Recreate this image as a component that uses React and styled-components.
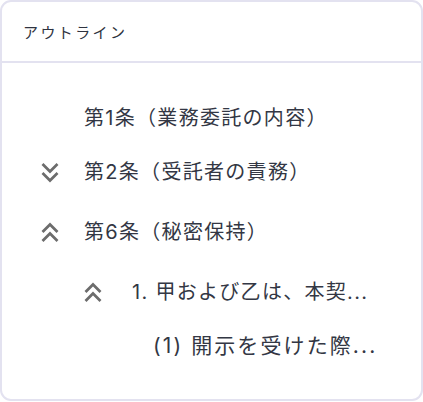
import React from "react";
import styled, { createGlobalStyle } from "styled-components";

const GlobalStyle = createGlobalStyle`
  html, body {
    margin: 0;
    padding: 0;
    background: #fff;
  }
  body {
    font-family: "Inter", "Noto Sans CJK JP", sans-serif;
  }
`;

const Card = styled.div`
  box-sizing: border-box;
  width: 423px;
  height: 401px;
  border: 2px solid #e3e2f0;
  border-radius: 11px;
  background: #fff;
  display: flex;
  flex-direction: column;
  overflow: hidden;
`;

const Header = styled.div`
  height: 59px;
  display: flex;
  align-items: center;
  padding: 0 21px;
  border-bottom: 2px solid #e3e2f0;
  font-size: 15px;
  color: #2f3340;
  letter-spacing: 2.4px;
`;

const Tree = styled.ul`
  list-style: none;
  margin: 0;
  padding: 31px 0 0;
`;

const Row = styled.li`
  display: flex;
  align-items: center;
  height: ${(p) => (p.$hasToggle ? 60 : 48)}px;
  padding-left: ${(p) => p.$indent}px;
`;

const Toggle = styled.button`
  display: flex;
  align-items: center;
  justify-content: center;
  width: 22px;
  height: 36px;
  padding: 0;
  margin-right: ${(p) => p.$gap}px;
  border: none;
  background: none;
  color: #6c6c6c;
  cursor: pointer;
`;

const Label = styled.span`
  font-size: ${(p) => (p.$deep ? 21 : 20)}px;
  line-height: 28px;
  letter-spacing: ${(p) => (p.$deep ? 2.1 : 1.3)}px;
  color: #333744;
  white-space: nowrap;
`;

const Chevrons = ({ up }) => (
  <svg width="18" height="21" viewBox="0 0 18 21" fill="none">
    <g
      stroke="currentColor"
      strokeWidth="2.7"
      strokeLinecap="butt"
      strokeLinejoin="miter"
      transform={up ? "rotate(180 9 10.5)" : undefined}
    >
      <polyline points="1.5,2 9,9.5 16.5,2" />
      <polyline points="1.5,11 9,18.5 16.5,11" />
    </g>
  </svg>
);

const items = [
  { label: "第1条（業務委託の内容）", indent: 82 },
  { label: "第2条（受託者の責務）", indent: 37, toggle: "down", gap: 23 },
  { label: "第6条（秘密保持）", indent: 37, toggle: "up", gap: 23 },
  { label: "1. 甲および乙は、本契...", indent: 80, toggle: "up", gap: 28 },
  { label: "(1) 開示を受けた際...", indent: 151, deep: true },
];

export default function App() {
  return (
    <>
      <GlobalStyle />
      <Card>
        <Header>アウトライン</Header>
        <Tree>
          {items.map((item) => (
            <Row key={item.label} $indent={item.indent} $hasToggle={!!item.toggle}>
              {item.toggle && (
                <Toggle $gap={item.gap}>
                  <Chevrons up={item.toggle === "up"} />
                </Toggle>
              )}
              <Label $deep={item.deep}>{item.label}</Label>
            </Row>
          ))}
        </Tree>
      </Card>
    </>
  );
}
